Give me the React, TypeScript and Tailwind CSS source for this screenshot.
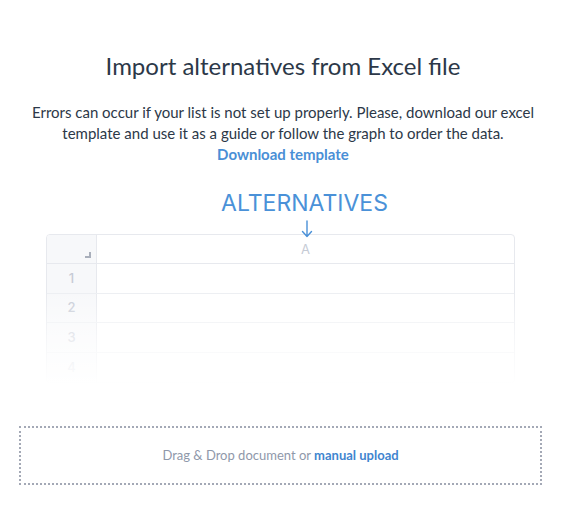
import React from "react";

const rows = [1, 2, 3, 4];

function SheetPreview() {
  return (
    <div className="relative ml-[46px] mr-[51px]">
      <div className="rounded-[4px] border border-[#e7e9ee] overflow-hidden">
        {/* header row */}
        <div className="flex h-[29px] border-b border-[#e7e9ee]">
          <div className="relative w-[50px] shrink-0 bg-[#f7f8fa] border-r border-[#e7e9ee]">
            <div className="absolute right-[5px] bottom-[5px] w-[6px] h-[6px] border-r-2 border-b-2 border-[#a9afbb]" />
          </div>
          <div className="flex-1 flex items-center justify-center pt-[1px] text-[13px] text-[#c6cbd6] font-['Inter',sans-serif]">
            A
          </div>
        </div>
        {rows.map((n) => (
          <div key={n} className="flex h-[29.5px] border-b border-[#eceef2] last:border-b-0">
            <div className="w-[50px] shrink-0 bg-[#f7f8fa] border-r border-[#e7e9ee] flex items-center justify-center text-[13px] font-medium text-[#c6cbd6] font-['Inter',sans-serif]">
              {n}
            </div>
            <div className="flex-1" />
          </div>
        ))}
      </div>
      {/* fade out */}
      <div className="absolute left-[-2px] right-[-2px] bottom-[-2px] h-[95px] bg-gradient-to-b from-white/0 via-white/60 to-white" />
    </div>
  );
}

export default function App() {
  return (
    <div className="w-[566px] h-[513px] bg-white font-['Lato',sans-serif] overflow-hidden">
      <h1 className="pt-[50px] text-center text-[24px] leading-[32px] text-[#2c3848]">
        Import alternatives from Excel file
      </h1>
      <p className="mt-[20px] px-[20px] text-center text-[15px] leading-[21px] text-[#2c3848]">
        Errors can occur if your list is not set up properly. Please, download our excel
        <br />
        template and use it as a guide or follow the graph to order the data.
        <br />
        <a className="font-bold text-[#4a8fd6]">Download template</a>
      </p>

      <div className="mt-[25px] flex flex-col items-center">
        <div className="text-[23px] leading-[26px] text-[#4a91d8] font-['Inter',sans-serif] ml-[43px]">
          ALTERNATIVES
        </div>
        <svg className="ml-[47px] mt-[4px] mb-[-4px] relative z-10" width="12" height="18" viewBox="0 0 12 18" fill="none">
          <path d="M6 1v15.5M1.5 11.5L6 16.5l4.5-5" stroke="#4a91d8" strokeWidth="1.4" strokeLinecap="round" strokeLinejoin="round" />
        </svg>
      </div>

      <SheetPreview />

      <div className="ml-[19px] mr-[24px] mt-[43px] h-[59px] border-2 border-dotted border-[#a4a9b6] flex items-center justify-center text-[13px] text-[#8f98aa]">
        <span>
          Drag &amp; Drop document or{" "}
          <a className="font-bold text-[#3f85cf]">manual upload</a>
        </span>
      </div>
    </div>
  );
}
